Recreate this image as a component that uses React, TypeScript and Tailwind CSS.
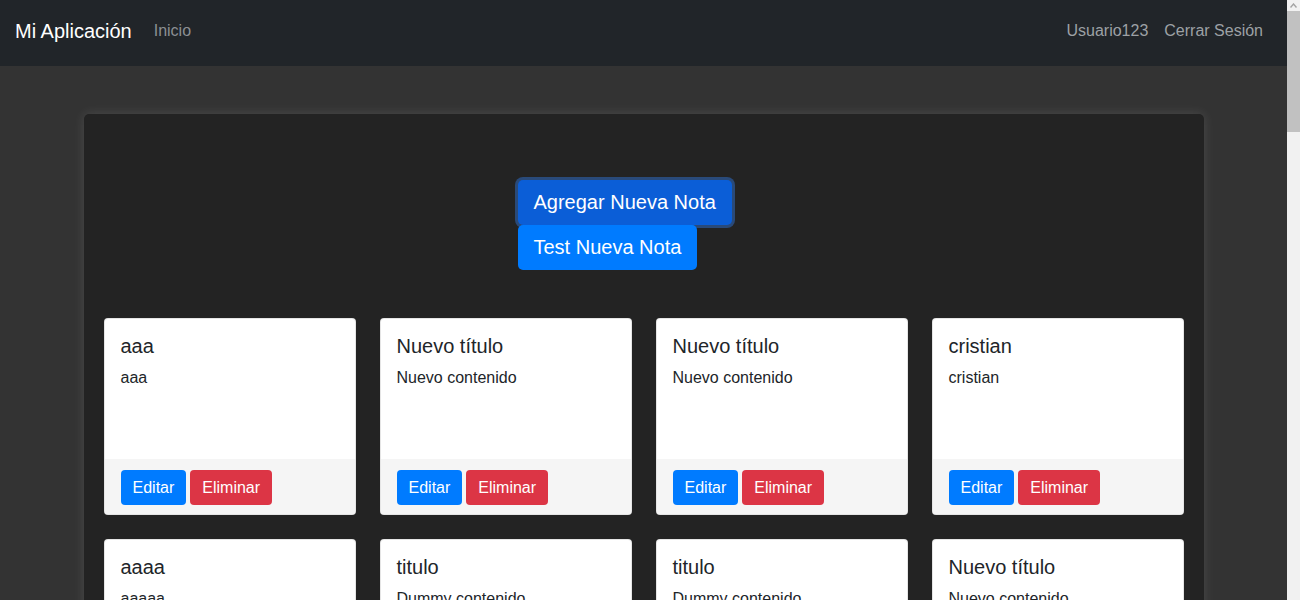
import React from "react";

interface Nota {
  id: number;
  titulo: string;
  contenido: string;
}

const notas: Nota[] = [
  { id: 1, titulo: "aaa", contenido: "aaa" },
  { id: 2, titulo: "Nuevo título", contenido: "Nuevo contenido" },
  { id: 3, titulo: "Nuevo título", contenido: "Nuevo contenido" },
  { id: 4, titulo: "cristian", contenido: "cristian" },
  { id: 5, titulo: "aaaa", contenido: "aaaaa" },
  { id: 6, titulo: "titulo", contenido: "Dummy contenido" },
  { id: 7, titulo: "titulo", contenido: "Dummy contenido" },
  { id: 8, titulo: "Nuevo título", contenido: "Nuevo contenido" },
];

const NotaCard = ({ nota }: { nota: Nota }) => (
  <div className="bg-white rounded-[4px] border border-black/10 overflow-hidden flex flex-col">
    <div className="px-4 pt-[15px] h-[140px]">
      <h5 className="text-[20px] leading-[24px] text-[#212529] mb-2">{nota.titulo}</h5>
      <p className="text-[16px] leading-[24px] text-[#212529]">{nota.contenido}</p>
    </div>
    <div className="bg-[#f5f5f5] px-4 pt-[11px] pb-[9px] flex gap-1">
      <button className="bg-[#007bff] text-white text-[16px] leading-[23px] h-[35px] px-3 pb-px rounded-[4px]">
        Editar
      </button>
      <button className="bg-[#dc3545] text-white text-[16px] leading-[23px] h-[35px] px-3 pb-px rounded-[4px]">
        Eliminar
      </button>
    </div>
  </div>
);

// barra de desplazamiento del navegador (la lista es larga)
const Scrollbar = () => (
  <div className="w-[13px] h-screen bg-[#f1f1f1] flex flex-col shrink-0">
    <div className="h-[11px] flex items-center justify-center">
      <svg width="7" height="5" viewBox="0 0 7 5">
        <path d="M0.5 4.5 L3.5 1 L6.5 4.5" fill="none" stroke="#a3a3a3" strokeWidth="1.4" />
      </svg>
    </div>
    <div className="h-[121px] bg-[#c1c1c1]" />
  </div>
);

const App = () => {
  return (
    <div
      className="flex h-screen overflow-hidden"
      style={{ fontFamily: '"Liberation Sans", Arial, sans-serif' }}
    >
      <div className="flex-1 bg-[#333333] pb-12 overflow-hidden">
        {/* Navbar */}
        <nav className="h-[66px] bg-[#212529] flex items-center justify-between pl-[15px] pr-4 pb-1">
          <div className="flex items-center">
            <span className="text-white text-[20px] leading-[30px]">Mi Aplicación</span>
            <a className="ml-[22px] text-[16px] text-[#8c8f93]">Inicio</a>
          </div>
          <div className="flex items-center">
            <a className="px-2 text-[16px] text-[#9da1a5]">Usuario123</a>
            <a className="px-2 text-[16px] text-[#9da1a5]">Cerrar Sesión</a>
          </div>
        </nav>

        {/* Contenedor */}
        <div className="max-w-[1120px] mx-auto mt-12 bg-[#232323] rounded-[5px] shadow-[0_0_12px_rgba(255,255,255,0.12)] px-5 pt-[66px] pb-6">
          <div className="flex justify-center">
            <div className="w-[252px] flex flex-col items-start">
              <button className="bg-[#0b5ed7] text-white text-[20px] leading-[30px] px-4 pt-[7px] pb-2 rounded-[5px] ring-[3px] ring-[#3184fd]/40">
                Agregar Nueva Nota
              </button>
              <button className="bg-[#007bff] text-white text-[20px] leading-[30px] px-4 pt-[7px] pb-2 rounded-[5px]">
                Test Nueva Nota
              </button>
            </div>
          </div>

          <div className="grid grid-cols-4 gap-6 mt-[48px]">
            {notas.map((nota) => (
              <NotaCard key={nota.id} nota={nota} />
            ))}
          </div>
        </div>
      </div>
      <Scrollbar />
    </div>
  );
};

export default App;
